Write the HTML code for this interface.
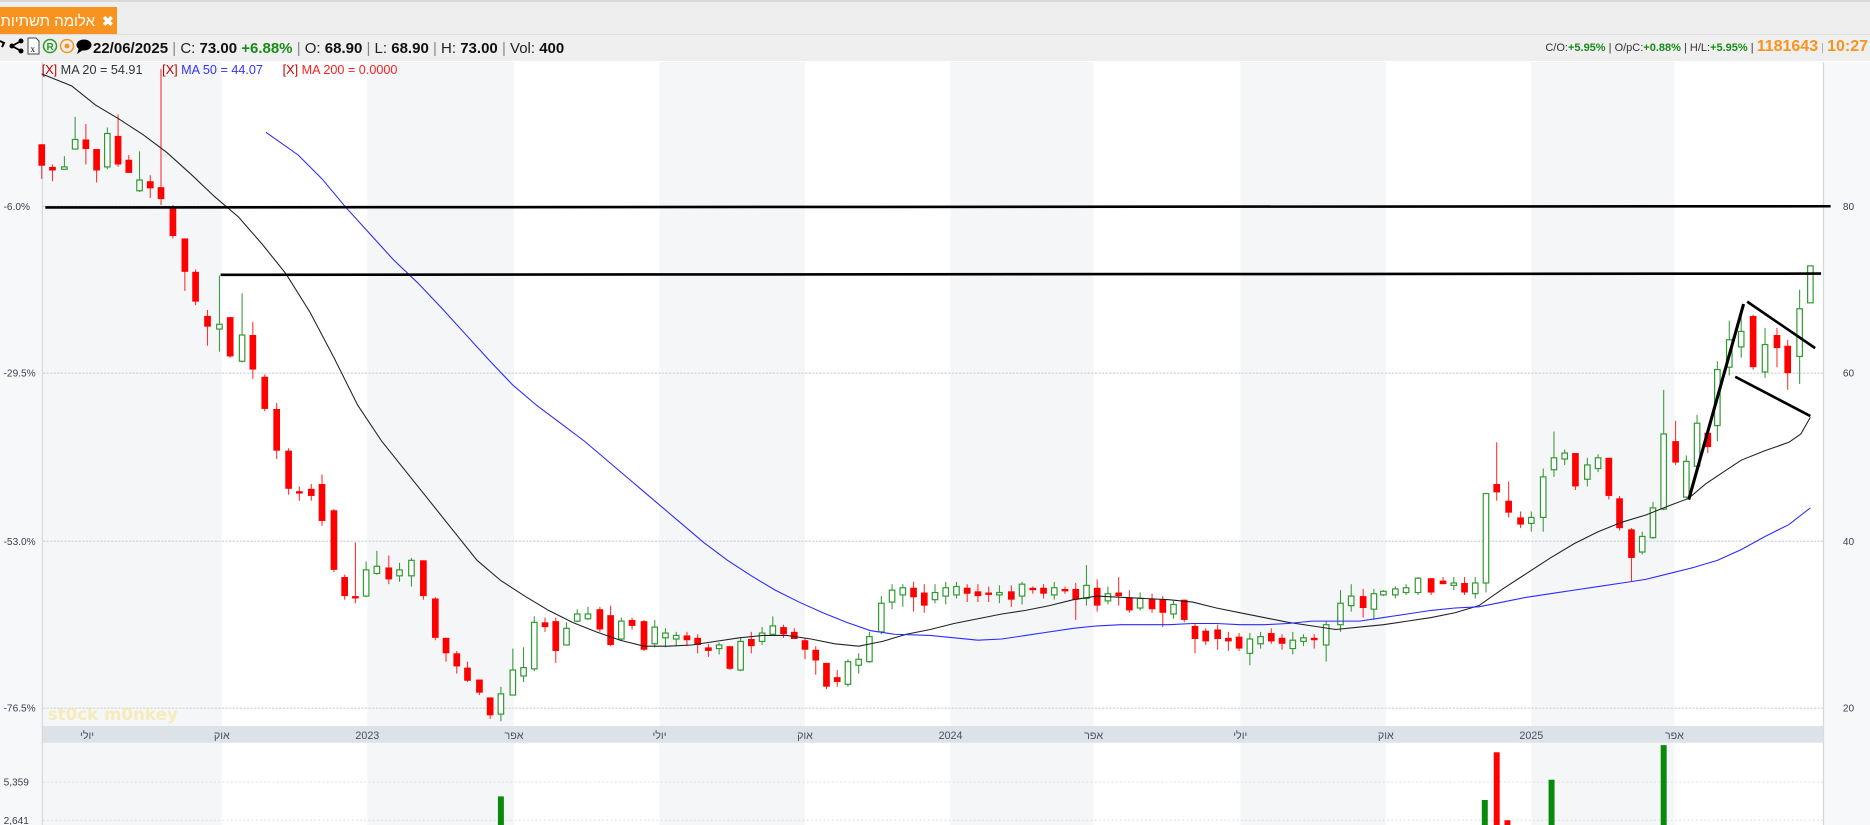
<!DOCTYPE html>
<html><head><meta charset="utf-8"><style>
*{margin:0;padding:0;box-sizing:border-box}
body{width:1870px;height:825px;overflow:hidden;background:#fff;font-family:"Liberation Sans",Arial,sans-serif;position:relative}
#top{position:absolute;left:0;top:0;width:1870px;height:34px;background:#eeeeee;border-top:2px solid #d8d8d8}
#tab{position:absolute;left:0;top:5px;width:117px;height:29px;background:#f7931e;color:#fff;font-size:15px;line-height:29px;white-space:nowrap;overflow:hidden}
#tab .x{position:absolute;left:102px;top:0;font-weight:bold;font-size:14px}
#tab .t{position:absolute;right:22px;top:0;font-family:"Liberation Sans","Noto Sans CJK JP",sans-serif}
#info{position:absolute;left:0;top:34px;width:1870px;height:27px;background:#efefef;border-top:1px solid #dcdcdc}
#info .l{position:absolute;left:93px;top:5px;font-size:15px;color:#222;white-space:nowrap}
#info .l b{color:#111}
#info .sep{color:#888;font-weight:normal}
#info .r{position:absolute;right:2px;top:3px;font-size:11px;color:#333;white-space:nowrap}
.g{color:#1a8a1a;font-weight:bold}
.o{color:#f7931e;font-weight:bold;font-size:16px}
svg#c{position:absolute;left:0;top:0}
</style></head><body>
<div id="top"><div id="tab"><span class="t">אלומה תשתיות שנ</span><span class="x">✖</span></div></div>
<div id="info">
<svg width="93" height="27" style="position:absolute;left:0;top:0">
<path d="M0 6 L4 8 L2 12" stroke="#000" stroke-width="2" fill="none"/>
<circle cx="21" cy="6" r="2.5" fill="#000"/><circle cx="12" cy="11" r="2.5" fill="#000"/><circle cx="21" cy="16" r="2.5" fill="#000"/>
<path d="M21 6 L12 11 L21 16" stroke="#000" stroke-width="1.8" fill="none"/>
<path d="M28 3 H36 L39 6 V19 H28 Z" fill="#fff" stroke="#444"/><text x="30.5" y="17" font-size="9" font-family="Liberation Serif">x</text>
<circle cx="50" cy="11" r="6.5" fill="none" stroke="#2a9a2a" stroke-width="1.5"/><text x="46.5" y="15" font-size="10" fill="#2a9a2a" font-weight="bold">R</text>
<circle cx="67" cy="11" r="6.5" fill="none" stroke="#f7931e" stroke-width="1.5"/><circle cx="67" cy="11" r="2.5" fill="#f7931e"/>
<ellipse cx="84" cy="10" rx="7.5" ry="5.5" fill="#000"/><path d="M79 13 L77 19 L83 15Z" fill="#000"/>
</svg>
<div class="l"><b>22/06/2025</b> <span class="sep">|</span> C: <b>73.00</b> <span class="g">+6.88%</span> <span class="sep">|</span> O: <b>68.90</b> <span class="sep">|</span> L: <b>68.90</b> <span class="sep">|</span> H: <b>73.00</b> <span class="sep">|</span> Vol: <b>400</b></div>
<div class="r">C/O:<span class="g">+5.95%</span> | O/pC:<span class="g">+0.88%</span> | H/L:<span class="g">+5.95%</span> | <span class="o">1181643</span> <span style="color:#aaa">|</span> <span class="o">10:27</span></div>
</div>
<svg id="c" width="1870" height="825" viewBox="0 0 1568 692" preserveAspectRatio="none">
<g id="bg"></g>
<g id="cd"></g>
</svg>
<script>
var NS="http://www.w3.org/2000/svg";
var bg=document.getElementById('bg'),cd=document.getElementById('cd');
function el(p,t,a,txt){var e=document.createElementNS(NS,t);for(var k in a)e.setAttribute(k,a[k]);if(txt!=null)e.textContent=txt;p.appendChild(e);return e;}
el(bg,'rect',{x:0,y:52,width:1568,height:640,fill:'#fff'});
el(bg,'rect',{x:0,y:52,width:36,height:640,fill:'#f7f8fa'});
el(bg,'rect',{x:1529,y:52,width:39,height:640,fill:'#f7f8fa'});
var bands=[[36,186],[308,431],[553,675],[797,917],[1040,1162],[1284,1404]];
bands.forEach(function(b){el(bg,'rect',{x:b[0],y:52,width:b[1]-b[0],height:640,fill:'#f5f6f8'});});
el(bg,'line',{x1:35.5,y1:52,x2:35.5,y2:692,stroke:'#d4d7dc','stroke-width':1});
el(bg,'line',{x1:1529,y1:52,x2:1529,y2:692,stroke:'#d4d7dc','stroke-width':1});
el(bg,'rect',{x:36,y:609,width:1493,height:14,fill:'#dde1e8'});
var lab=[[73,'יולי'],[186,'אוק'],[308,'2023'],[431,'אפר'],[553,'יולי'],[675,'אוק'],[797,'2024'],[917,'אפר'],[1040,'יולי'],[1162,'אוק'],[1284,'2025'],[1404,'אפר']];
lab.forEach(function(l){el(bg,'text',{x:l[0],y:620,'font-size':9,fill:'#4a5060','text-anchor':'middle','font-family':'Liberation Sans, Noto Sans CJK JP, sans-serif'},l[1]);});
[173,313,454,594].forEach(function(y){el(bg,'line',{x1:36,y1:y,x2:1529,y2:y,stroke:'#d0d4dc','stroke-width':1,'stroke-dasharray':'2,1'});});
[656,688].forEach(function(y){el(bg,'line',{x1:36,y1:y,x2:1529,y2:y,stroke:'#d8dbe0','stroke-width':0.8,'stroke-dasharray':'1.5,2'});});
[[173,'-6.0%'],[313,'-29.5%'],[454,'-53.0%'],[594,'-76.5%']].forEach(function(l){el(bg,'text',{x:3,y:l[0]+3,'font-size':8.5,fill:'#3a4050'},l[1]);});
[[173,'80'],[313,'60'],[454,'40'],[594,'20']].forEach(function(l){el(bg,'text',{x:1550,y:l[0]+3,'font-size':8.5,fill:'#3a4050','text-anchor':'middle'},l[1]);});
el(bg,'text',{x:3,y:659,'font-size':8.5,fill:'#3a4050'},'5,359');
el(bg,'text',{x:3,y:691,'font-size':8.5,fill:'#3a4050'},'2,641');
var t=el(bg,'text',{x:35,y:62,'font-size':10.6});
el(t,'tspan',{fill:'#c00000'},'[X]');el(t,'tspan',{fill:'#333'},' MA 20 = 54.91');
t=el(bg,'text',{x:136,y:62,'font-size':10.6});
el(t,'tspan',{fill:'#c00000'},'[X]');el(t,'tspan',{fill:'#3333ff'},' MA 50 = 44.07');
t=el(bg,'text',{x:237,y:62,'font-size':10.6});
el(t,'tspan',{fill:'#c00000'},'[X]');el(t,'tspan',{fill:'#ff2020'},' MA 200 = 0.0000');
el(bg,'text',{x:40,y:604,'font-size':14,'font-weight':'bold',fill:'#f7e7a0',opacity:0.7,'font-family':'DejaVu Sans, sans-serif'},'st0ck m0nkey');
var D="35,121,139,121,150,r;44,140,143,138,152,r;54,140,142,131,142,g;63,117,125,98,125,g;72,117,125,104,138,r;81,125,143,125,153,r;90,112,140,107,142,g;99,114,138,96,140,r;108,134,145,130,145,r;117,151,160,127,161,g;126,152,158,147,166,r;135,157,167,58,172,r;145,174,198,172,200,r;155,200,228,200,244,r;164,228,253,226,256,r;174,265,274,260,290,r;184,272,276,231,295,g;193,266,299,266,300,r;203,281,303,246,304,g;212,281,310,270,318,r;222,316,343,314,345,r;232,343,378,338,385,r;242,378,410,376,415,r;251,412,414,408,420,r;261,410,416,406,420,r;270,406,437,398,441,r;280,428,478,427,480,r;289,484,500,482,503,r;298,500,502,455,506,r;307,478,500,471,501,g;316,475,481,462,482,g;326,476,486,466,490,r;335,478,483,472,488,g;345,470,483,468,492,g;355,470,500,470,503,r;365,502,535,501,537,r;374,535,548,535,555,r;383,548,559,546,565,r;392,560,571,555,572,r;402,570,581,570,583,r;411,585,600,585,603,r;420,582,599,576,605,g;430,562,583,544,583,g;439,560,567,543,572,g;448,522,561,517,563,g;457,522,526,518,530,r;466,521,546,518,556,r;475,527,541,522,541,g;484,515,521,511,522,g;493,515,519,509,520,g;503,511,528,509,530,r;512,516,541,508,542,r;521,521,536,518,537,g;530,520,525,518,528,r;540,521,545,520,546,r;549,526,540,520,543,g;558,531,535,527,543,g;567,533,536,530,542,g;576,533,537,530,542,r;585,535,541,532,548,r;594,543,546,540,551,r;603,541,544,539,549,g;612,542,561,542,562,r;621,538,562,535,563,g;630,536,542,530,548,r;639,531,538,526,541,g;648,525,532,517,533,g;657,526,532,524,535,r;666,530,536,527,536,r;675,537,545,535,553,r;684,545,554,542,566,r;693,556,576,556,578,r;702,568,572,562,576,r;711,555,574,553,576,g;720,553,558,548,565,g;729,534,555,530,556,g;739,506,530,500,532,g;748,495,505,490,511,g;757,493,499,490,509,g;766,493,501,488,513,r;775,497,508,490,514,r;784,497,503,490,506,g;793,493,500,488,507,g;802,492,499,488,502,g;811,493,498,490,505,r;820,496,500,490,505,r;829,497,499,492,505,r;838,497,499,491,506,g;848,496,503,491,509,r;857,490,500,488,507,g;866,493,495,492,498,r;875,493,498,490,502,r;884,493,499,488,503,g;893,494,496,492,498,r;902,494,503,489,520,r;911,491,502,474,508,g;920,493,508,486,513,r;929,498,504,492,507,g;938,497,500,484,508,r;947,501,512,495,514,r;956,502,510,497,512,g;966,502,511,498,514,r;975,503,514,500,526,r;984,507,515,504,519,g;993,503,520,503,522,r;1002,525,536,523,548,r;1011,529,538,527,541,r;1021,528,536,524,545,r;1030,535,538,530,546,r;1039,534,544,531,546,r;1048,536,548,531,558,g;1057,534,540,530,544,g;1066,531,538,527,540,r;1075,535,540,532,545,r;1084,537,544,530,549,g;1093,535,538,532,542,g;1102,535,537,532,544,r;1112,524,541,521,555,g;1124,506,524,495,530,g;1133,500,508,490,513,g;1143,500,510,494,518,r;1152,498,511,494,520,g;1160,496,499,495,500,g;1170,494,499,492,502,g;1179,493,497,490,499,g;1189,485,497,484,499,g;1200,485,497,485,499,r;1210,487,490,484,490,r;1219,489,491,484,495,g;1228,489,497,484,499,r;1237,489,498,484,502,g;1246,414,489,414,497,g;1255,406,413,371,420,r;1265,420,430,404,434,r;1275,434,440,429,443,r;1284,434,439,429,446,g;1294,400,434,393,446,g;1303,384,394,362,400,g;1312,380,385,377,390,g;1321,380,408,380,411,r;1331,390,402,384,408,g;1340,384,393,381,396,g;1349,384,416,384,419,r;1358,418,443,416,445,r;1368,444,468,443,488,r;1377,450,463,446,465,g;1386,426,451,421,452,g;1395,364,427,327,428,g;1405,370,388,353,390,r;1414,387,417,382,418,g;1423,355,391,348,394,g;1432,363,375,359,380,r;1440,310,357,303,370,g;1450,285,308,269,315,g;1460,278,291,262,300,g;1470,265,308,264,310,r;1480,289,312,275,317,g;1490,281,292,275,308,r;1499,290,313,285,327,r;1509,259,299,243,322,g;1518,223,254,223,254,g";
D.split(';').forEach(function(s){var a=s.split(',');var x=+a[0],t=+a[1],b=+a[2],h=+a[3],l=+a[4],g=a[5]=='g';
var col=g?'#2f9a2f':'#ff0000';
el(cd,'line',{x1:x,y1:Math.min(h,t),x2:x,y2:Math.max(l,b),stroke:g?'#3a9a3a':'#ff3030','stroke-width':0.9});
if(b-t<1.5){b=t+1.5;}
if(g)el(cd,'rect',{x:x-2.3,y:t,width:4.6,height:b-t,fill:'#fff',stroke:col,'stroke-width':1});
else el(cd,'rect',{x:x-2.8,y:t,width:5.6,height:b-t,fill:col});});
function poly(pts,col,w){el(cd,'polyline',{points:pts,fill:'none',stroke:col,'stroke-width':w});}
poly("35,62 60,72 80,88 100,100 120,113 140,128 160,146 180,165 200,182 220,205 240,230 260,262 280,300 300,340 320,370 340,395 360,420 380,445 400,470 420,487 440,500 460,512 480,522 500,530 520,537 540,542 560,542 580,541 600,538 620,535 640,533 660,533 680,536 700,540 720,542 740,538 760,532 780,528 800,523 820,519 840,515 860,512 880,508 900,503 920,500 940,501 960,502 980,503 1000,505 1020,510 1040,514 1060,518 1080,522 1100,525 1120,528 1140,526 1160,524 1180,521 1200,518 1220,514 1240,508 1260,494 1280,481 1300,468 1320,456 1340,446 1360,438 1380,432 1400,424 1416,418 1430,406 1445,396 1460,386 1480,378 1500,371 1510,364 1518,350",'#222',0.9);
poly("223,111 250,130 270,150 290,174 310,196 330,218 350,237 370,258 390,280 410,302 430,323 450,340 470,355 490,370 510,387 530,404 550,421 570,438 590,455 610,470 630,483 650,495 670,505 690,514 710,522 730,529 750,532 780,533 800,535 820,537 840,536 860,533 880,530 900,527 920,525 940,524 960,524 980,524 1000,523 1020,523 1040,524 1060,524 1080,523 1100,521 1120,521 1140,521 1160,518 1180,515 1200,512 1220,510 1240,509 1260,505 1280,501 1300,498 1320,495 1340,492 1360,489 1380,486 1400,481 1420,476 1440,470 1460,461 1480,450 1500,440 1518,426",'#2a2aff',0.9);
el(cd,'line',{x1:38,y1:174,x2:1535,y2:173,stroke:'#000','stroke-width':2.2});
el(cd,'line',{x1:185,y1:230.5,x2:1527,y2:229.5,stroke:'#000','stroke-width':2.2});
el(cd,'line',{x1:1416,y1:419,x2:1462,y2:255,stroke:'#000','stroke-width':2.6});
el(cd,'line',{x1:1465,y1:253,x2:1522,y2:292,stroke:'#000','stroke-width':2.2});
el(cd,'line',{x1:1455,y1:316,x2:1518,y2:349,stroke:'#000','stroke-width':2.2});
[[420,668,'#0a8a0a'],[1245,671,'#0a8a0a'],[1255,631,'#ff0000'],[1264,688,'#ff0000'],[1301,654,'#0a8a0a'],[1395,625,'#0a8a0a']].forEach(function(v){el(cd,'rect',{x:v[0]-2.5,y:v[1],width:5,height:692-v[1],fill:v[2]});});
</script>
</body></html>
